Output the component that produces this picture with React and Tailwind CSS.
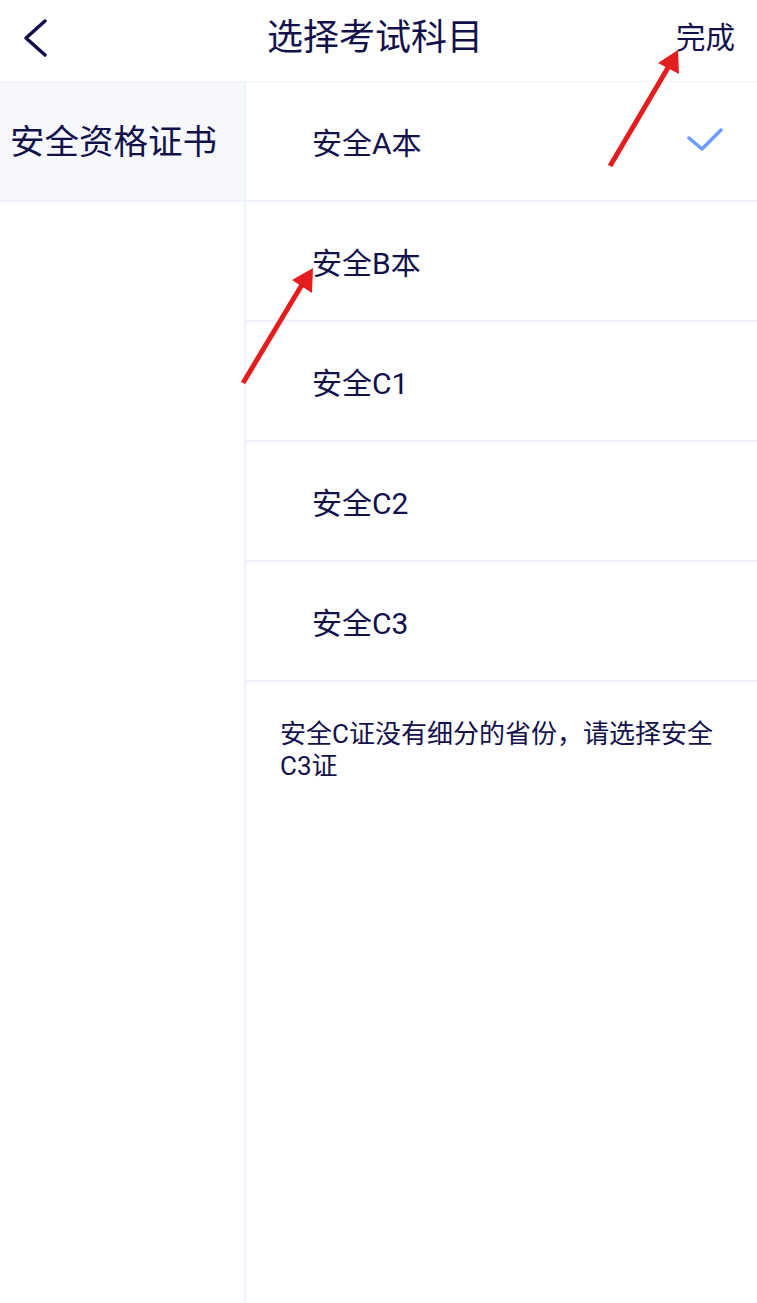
import React, { useState } from "react";

const subjects = ["安全A本", "安全B本", "安全C1", "安全C2", "安全C3"];

const Arrow = ({ className, d, head }) => (
  <svg className={`absolute pointer-events-none ${className}`} width="757" height="1303" viewBox="0 0 757 1303">
    <path d={d} stroke="#e41e1e" strokeWidth="5" strokeLinecap="butt" fill="none" />
    <polygon points={head} fill="#e41e1e" />
  </svg>
);

export default function App() {
  const [selected, setSelected] = useState(0);

  return (
    <div
      className="relative w-[757px] h-[1303px] bg-white text-[#13114b] overflow-hidden flex flex-col"
      style={{ fontFamily: 'Roboto, "Noto Sans CJK SC", sans-serif' }}
    >
      {/* Header */}
      <div className="h-[81px] shrink-0 flex items-center justify-between px-[22px] pb-[6px]">
        <svg width="30" height="40" viewBox="0 0 30 40">
          <path d="M23 3 L4 20 L23 37" stroke="#100d4d" strokeWidth="3.5" fill="none" strokeLinecap="round" strokeLinejoin="round" />
        </svg>
        <h1 className="text-[36px] leading-none ml-[22px]">选择考试科目</h1>
        <button className="text-[29.5px] leading-none mt-[2px]">完成</button>
      </div>

      {/* Body */}
      <div className="flex flex-1 border-t border-[#f3f4f8]">
        {/* Categories */}
        <div className="w-[246px] shrink-0 border-r-2 border-[#eef2fc]">
          <div className="h-[120px] bg-[#f7f8fc] border-b-2 border-[#eef2fc] flex items-center pl-[10px] pt-[4px] text-[34.5px]">
            安全资格证书
          </div>
        </div>

        {/* Subjects */}
        <div className="flex-1">
          {subjects.map((s, i) => (
            <div
              key={s}
              onClick={() => setSelected(i)}
              className="h-[120px] border-b-2 border-[#eef2fc] flex items-center justify-between pl-[66px] pr-[34px] pt-[4px] text-[30px]"
            >
              <span>{s}</span>
              {selected === i && (
                <svg width="36" height="26" viewBox="0 0 36 26" className="-mt-[6px]">
                  <path d="M2 11 L15 22 L34 3" stroke="#6c9cff" strokeWidth="3.5" fill="none" strokeLinecap="round" strokeLinejoin="round" />
                </svg>
              )}
            </div>
          ))}
          <p className="pl-[34px] pr-[34px] pt-[36px] text-[26px] leading-[32px]">
            安全C证没有细分的省份，请选择安全C3证
          </p>
        </div>
      </div>

      {/* Annotation arrows */}
      <Arrow className="left-0 top-0" d="M610 166 L669 66" head="678,50 658,63 679,74" />
      <Arrow className="left-0 top-0" d="M243 383 L303 283" head="313,268 292,280 312,293" />
    </div>
  );
}
